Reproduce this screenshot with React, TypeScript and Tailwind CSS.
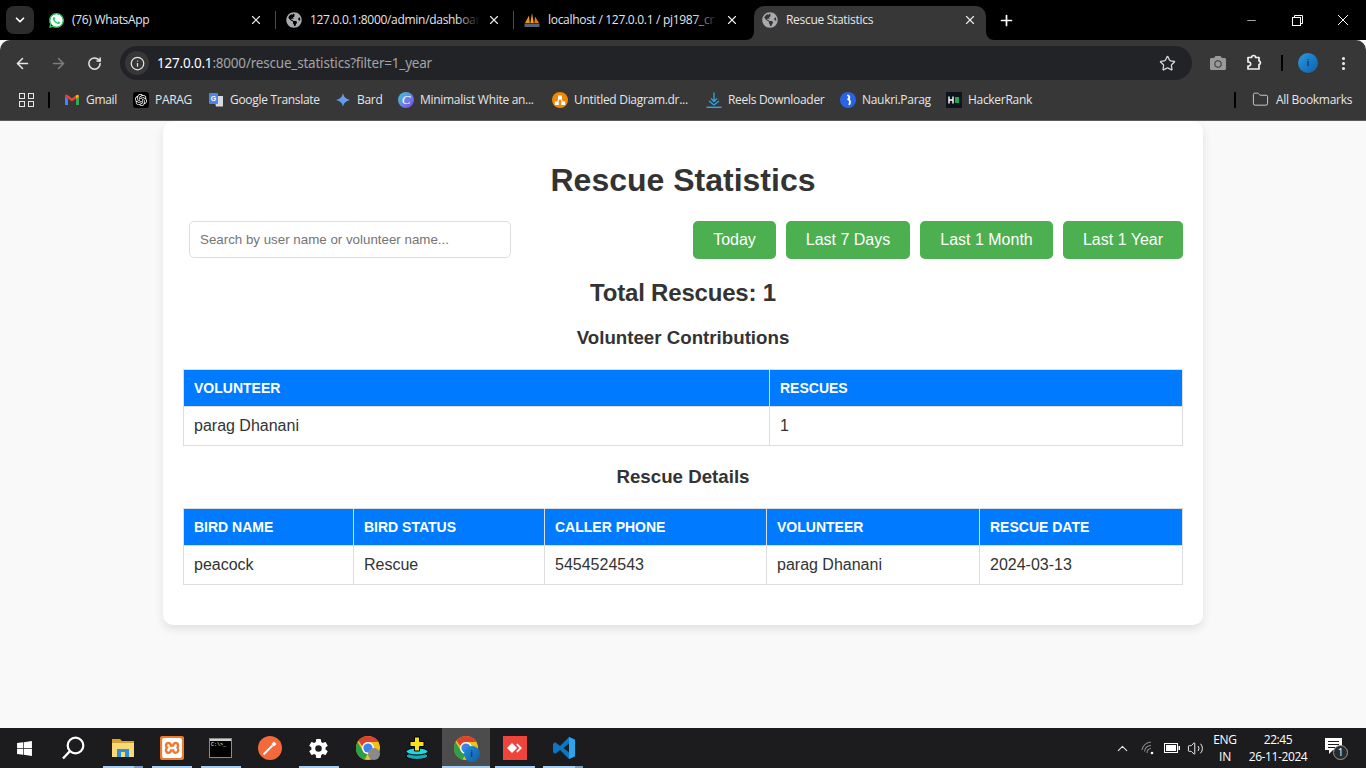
import React from 'react';
import { ArrowLeft, ArrowRight, RotateCw, Info, Star, X, Plus, ChevronDown, Minus, Folder, EllipsisVertical, ChevronUp, Volume2 } from 'lucide-react';
import { FaGlobeAmericas, FaWindows, FaWhatsapp, FaCamera } from 'react-icons/fa';
import { SiOpenai, SiXampp } from 'react-icons/si';
import { IoSettingsSharp } from 'react-icons/io5';

const uiFont = "font-['Open_Sans','Noto_Sans',sans-serif]";

const Globe = () => <FaGlobeAmericas className="text-[#a9aaad] shrink-0" size={16} />;

const WhatsAppIcon = () => (
  <span className="relative w-[17px] h-[17px] shrink-0 flex items-center justify-center">
    <span className="absolute inset-[2px] rounded-full bg-white" />
    <FaWhatsapp className="relative text-[#25d366]" size={17} />
  </span>
);

const PmaIcon = () => (
  <svg width="16" height="16" viewBox="0 0 16 16" className="shrink-0">
    <path d="M1 11 5 3.500 5.800 11z" fill="#f29111" />
    <path d="M6.400 11 8 1l1.800 10z" fill="#f6a21e" />
    <path d="M10.400 11 11 4.500 15 11z" fill="#e07b10" />
    <rect x="0.500" y="11.500" width="15" height="3.500" fill="#56627f" />
  </svg>
);

const Tab = ({ icon, title, divider }: { icon: React.ReactNode; title: string; divider?: boolean }) => (
  <div className="relative w-[238px] h-full flex items-center shrink-0 pl-2">
    <div className="w-4 flex justify-center">{icon}</div>
    <div className="relative ml-2 w-[170px] overflow-hidden whitespace-nowrap text-xs tracking-[-0.3px] text-[#e4e5e8]">
      {title}
      <span className="absolute right-0 inset-y-0 w-6 bg-gradient-to-r from-transparent to-black" />
    </div>
    <X size={14} strokeWidth={2} className="absolute left-[209px] text-[#e8e8e8]" />
    {divider && <span className="absolute left-[235px] top-[11px] h-[18px] w-px bg-[#4a4a4a]" />}
  </div>
);

const TabStrip = () => (
  <div className="h-10 bg-black flex shrink-0 relative">
    <div className="w-[40px] flex items-start pt-[6px] pl-[6px] shrink-0">
      <div className="w-[28px] h-[28px] rounded-lg bg-[#2c2c2c] flex items-center justify-center">
        <ChevronDown size={14} strokeWidth={3} className="text-white" />
      </div>
    </div>
    <div className="flex h-full">
      <Tab icon={<WhatsAppIcon />} title="(76) WhatsApp" divider />
      <Tab icon={<Globe />} title="127.0.0.1:8000/admin/dashboar" divider />
      <Tab icon={<PmaIcon />} title="localhost / 127.0.0.1 / pj1987_cr" />
      {/* active tab */}
      <div className="relative w-[232px] mt-[6px] h-[34px] pb-[6px] bg-[#373737] rounded-t-[10px] flex items-center shrink-0 pl-[8px]">
        <div className="w-4 flex justify-center">
          <Globe />
        </div>
        <span className="ml-2 text-xs tracking-[-0.3px] text-[#e6e6e6] whitespace-nowrap">Rescue Statistics</span>
        <X size={14} strokeWidth={2} className="absolute left-[209px] text-[#e8e8e8]" />
        <span className="absolute -left-2 bottom-0 w-2 h-2 bg-[#373737]">
          <span className="block w-2 h-2 bg-black rounded-br-[8px]" />
        </span>
        <span className="absolute -right-2 bottom-0 w-2 h-2 bg-[#373737]">
          <span className="block w-2 h-2 bg-black rounded-bl-[8px]" />
        </span>
      </div>
      <div className="w-[40px] flex items-center justify-center">
        <Plus size={17} strokeWidth={2.4} className="text-white" />
      </div>
    </div>
    <div className="ml-auto flex h-full items-center text-white">
      <div className="w-[46px] flex justify-center"><Minus size={13} strokeWidth={1.2} /></div>
      <div className="w-[46px] flex justify-center">
        <svg width="11" height="11" viewBox="0 0 11 11" fill="none" stroke="#fff" strokeWidth="1">
          <rect x="0.5" y="2.5" width="8" height="8" />
          <path d="M2.500 2.500v-2h8v8h-2" />
        </svg>
      </div>
      <div className="w-[46px] flex justify-center">
        <svg width="12" height="12" viewBox="0 0 12 12" stroke="#fff" strokeWidth="1"><path d="M1 1l10 10M11 1 1 11" /></svg>
      </div>
    </div>
  </div>
);

const PuzzleIcon = () => (
  <svg width="18" height="18" viewBox="0 0 18 18" fill="none" stroke="#f1f1f1" strokeWidth="1.700">
    <path d="M2 3.500h3.600a2 2 0 0 1 4 0H13v3.400a1.900 1.900 0 0 1 0 3.700V15H2v-3h.6a1.800 1.800 0 0 0 2-2 1.800 1.800 0 0 0-2-2H2z" strokeLinejoin="round" />
  </svg>
);

const Toolbar = () => (
  <div className="h-10 pt-[6px] bg-[#373737] rounded-t-[10px] flex items-center shrink-0 relative">
    <div className="w-[120px] flex items-center shrink-0">
      <div className="w-[44px] flex justify-center"><ArrowLeft size={17} strokeWidth={2.2} className="text-[#e6e6e6]" /></div>
      <div className="w-[28px] flex justify-center"><ArrowRight size={17} strokeWidth={2.2} className="text-[#7d7d7d]" /></div>
      <div className="w-[44px] flex justify-center"><RotateCw size={15} strokeWidth={2.4} className="text-[#e6e6e6]" /></div>
    </div>
    <div className="w-[1072px] h-[34px] rounded-full bg-[#222327] flex items-center shrink-0 pl-[5px]">
      <div className="w-6 h-6 rounded-full bg-[#373737] flex items-center justify-center">
        <Info size={15} strokeWidth={2} className="text-[#e6e6e6]" />
      </div>
      <div className="ml-[8px] text-[13.5px] tracking-[-0.2px] text-[#a2a3a6] whitespace-nowrap font-['Noto_Sans',sans-serif]">
        <span className="text-white">127.0.0.1</span>:8000/rescue_statistics?filter=1_year
      </div>
      <Star size={17} strokeWidth={1.8} className="ml-auto mr-[16px] text-[#d6d6d6]" />
    </div>
    <div className="flex-1 flex items-center">
      <div className="w-[52px] flex justify-center"><FaCamera size={16} className="text-[#9a9a9a]" /></div>
      <div className="w-[22px] flex justify-center"><PuzzleIcon /></div>
      <span className="ml-[15px] w-[2px] h-[16px] bg-black" />
      <span className="ml-[15px] w-5 h-5 rounded-full bg-gradient-to-br from-[#2a9be0] to-[#0f5fa8] flex items-center justify-center text-[9px] text-[#0b3f78] font-bold">i</span>
      <EllipsisVertical size={17} strokeWidth={2.4} className="ml-[17px] text-[#ececec]" />
    </div>
  </div>
);

const GmailIcon = () => (
  <svg width="16" height="16" viewBox="0 0 16 16" className="shrink-0">
    <path d="M1 4v9h3V7z" fill="#4285f4" />
    <path d="M15 4v9h-3V7z" fill="#34a853" />
    <path d="M1 4.200 8 9.500l7-5.300-.2-1.400-1.900-.1L8 6.200 3.100 2.700l-1.900.1z" fill="#ea4335" />
    <path d="M12 7l3-2.800V4l-2-1.300-1 .9z" fill="#fbbc04" />
  </svg>
);

const TranslateIcon = () => (
  <svg width="16" height="16" viewBox="0 0 16 16" className="shrink-0">
    <path d="M6 4h9v10.500H8z" fill="#d8d9dc" />
    <rect x="1" y="1" width="9" height="11" rx="1" fill="#4a86e8" />
    <text x="5.500" y="9" fontSize="7" fontWeight="700" fill="#fff" textAnchor="middle" fontFamily="'Liberation Sans',sans-serif">G</text>
  </svg>
);

const BardIcon = () => (
  <svg width="16" height="16" viewBox="0 0 16 16" className="shrink-0">
    <defs>
      <linearGradient id="bard" x1="0" y1="1" x2="1" y2="0">
        <stop offset="0" stopColor="#4f8cf0" />
        <stop offset="1" stopColor="#7fa6ee" />
      </linearGradient>
    </defs>
    <path d="M8 1c.7 3.900 2.700 6 7 7-4.300 1-6.300 3.100-7 7-.7-3.900-2.700-6-7-7 4.300-1 6.300-3.100 7-7z" fill="url(#bard)" />
  </svg>
);

const CanvaIcon = () => (
  <span className="w-4 h-4 rounded-full bg-gradient-to-br from-[#18c5d8] to-[#7a32e8] shrink-0 flex items-center justify-center text-white text-[13px] italic font-['Liberation_Serif',serif] leading-none">C</span>
);

const DrawioIcon = () => (
  <svg width="16" height="16" viewBox="0 0 16 16" className="shrink-0">
    <circle cx="8" cy="8" r="8" fill="#f08705" />
    <path d="M8 6 4.500 11M8 6l3.500 5" stroke="#fff" strokeWidth="1.200" />
    <rect x="6" y="3.500" width="4" height="3.500" fill="#fff" />
    <rect x="2.800" y="9.500" width="4" height="3.500" fill="#fff" />
    <rect x="9.200" y="9.500" width="4" height="3.500" fill="#fff" />
  </svg>
);

const ReelsIcon = () => (
  <svg width="16" height="16" viewBox="0 0 16 16" fill="none" stroke="#2aa8e6" strokeWidth="1.300" className="shrink-0">
    <path d="M8 0.500v9M5 6.500l3 3 3-3M3 9l5 4 5-4" />
    <path d="M0.500 15.300h15" strokeWidth="1.400" />
  </svg>
);

const NaukriIcon = () => (
  <svg width="16" height="16" viewBox="0 0 16 16" className="shrink-0">
    <circle cx="8" cy="8" r="8" fill="#2b63e8" />
    <path d="M8 3.500c1.800 1 1.800 2.500.3 3.800 1.700 1.200 2.200 3 1 5" fill="none" stroke="#fff" strokeWidth="1.800" strokeLinecap="round" />
  </svg>
);

const HackerRankIcon = () => (
  <svg width="16" height="16" viewBox="0 0 16 16" className="shrink-0">
    <rect width="16" height="16" fill="#0e141e" />
    <path d="M3 4.500v7M7 4.500v7M3 8h4" stroke="#fff" strokeWidth="1.400" />
    <rect x="9" y="5" width="4" height="6" fill="#1ba94c" />
  </svg>
);

const Bookmark = ({ icon, label, textWidth }: { icon: React.ReactNode; label: string; textWidth: string }) => (
  <div className="flex items-center gap-[6px] shrink-0">
    {icon}
    <span className={`text-xs tracking-[-0.3px] text-[#e6e6e6] whitespace-nowrap ${textWidth}`}>{label}</span>
  </div>
);

const BookmarksBar = () => (
  <div className="h-[41px] bg-[#373737] border-b border-[#5c5c5c] flex items-center shrink-0 relative pb-[1px]">
    <div className="w-[16px] ml-[19px] grid grid-cols-2 gap-[2px] shrink-0">
      <span className="w-[6px] h-[6px] border-[1.5px] border-[#e6e6e6]" />
      <span className="w-[6px] h-[6px] border-[1.5px] border-[#e6e6e6]" />
      <span className="w-[6px] h-[6px] border-[1.5px] border-[#e6e6e6]" />
      <span className="w-[6px] h-[6px] border-[1.5px] border-[#e6e6e6]" />
    </div>
    <span className="ml-[13px] w-[2px] h-[16px] bg-black shrink-0" />
    <div className="ml-[14px] flex items-center gap-4">
      <Bookmark icon={<GmailIcon />} label="Gmail" textWidth="w-[31px]" />
      <Bookmark
        icon={
          <span className="w-4 h-4 rounded-[3px] bg-black flex items-center justify-center shrink-0">
            <SiOpenai size={12} className="text-white" />
          </span>
        }
        label="PARAG"
        textWidth="w-[37px]"
      />
      <Bookmark icon={<TranslateIcon />} label="Google Translate" textWidth="w-[89px]" />
      <Bookmark icon={<BardIcon />} label="Bard" textWidth="w-[25px]" />
      <Bookmark icon={<CanvaIcon />} label="Minimalist White an..." textWidth="w-[116px]" />
      <Bookmark icon={<DrawioIcon />} label="Untitled Diagram.dr..." textWidth="w-[116px]" />
      <Bookmark icon={<ReelsIcon />} label="Reels Downloader" textWidth="w-[96px]" />
      <Bookmark icon={<NaukriIcon />} label="Naukri.Parag" textWidth="w-[68px]" />
      <Bookmark icon={<HackerRankIcon />} label="HackerRank" textWidth="w-[63px]" />
    </div>
    <span className="ml-auto w-[2px] h-[16px] bg-black shrink-0" />
    <div className="ml-[16px] mr-[14px] flex items-center gap-[7px]">
      <Folder size={17} strokeWidth={1.4} className="text-[#c9c9c9]" />
      <span className="text-xs tracking-[-0.3px] text-[#e6e6e6] whitespace-nowrap w-[76px]">All Bookmarks</span>
    </div>
  </div>
);

const FILTERS = [
  { label: 'Today', width: 'w-[83px]' },
  { label: 'Last 7 Days', width: 'w-[124px]' },
  { label: 'Last 1 Month', width: 'w-[133px]' },
  { label: 'Last 1 Year', width: 'w-[120px]' },
];

const DataTable = ({ cols, head, row }: { cols: string[]; head: string[]; row: string[] }) => (
  <table className="w-[999px] table-fixed border-collapse">
    <colgroup>
      {cols.map((c, i) => (
        <col key={i} className={c} />
      ))}
    </colgroup>
    <thead>
      <tr>
        {head.map((h) => (
          <th key={h} className="h-[37px] px-[10px] border border-[#dddddd] bg-[#007bff] text-left text-sm font-bold text-white uppercase">
            {h}
          </th>
        ))}
      </tr>
    </thead>
    <tbody>
      <tr>
        {row.map((c, i) => (
          <td key={i} className="h-[39px] px-[10px] border border-[#dddddd] text-base text-[#333333]">
            {c}
          </td>
        ))}
      </tr>
    </tbody>
  </table>
);

const Card = () => (
  <div className="w-[1040px] mx-auto bg-white rounded-[10px] shadow-[0_4px_10px_rgba(0,0,0,0.1)] px-5 pt-[41px] pb-10 font-['Liberation_Sans',Arial,sans-serif] text-[#333333]">
    <h1 className="text-[32px] leading-[37px] font-bold text-center">Rescue Statistics</h1>
    <div className="mt-[22px] flex items-start">
      <input
        readOnly
        placeholder="Search by user name or volunteer name..."
        className="ml-[6px] w-[322px] h-[37px] px-[10px] border border-[#dddddd] rounded-[5px] text-[13.33px] bg-white outline-none placeholder:text-[#757575]"
      />
      <div className="ml-auto flex gap-[10px]">
        {FILTERS.map((f) => (
          <button key={f.label} className={`h-[38px] rounded-[5px] bg-[#4caf50] text-base text-white ${f.width}`}>
            {f.label}
          </button>
        ))}
      </div>
    </div>
    <h2 className="mt-5 text-2xl tracking-[-0.2px] leading-[28px] font-bold text-center">Total Rescues: 1</h2>
    <h3 className="mt-[19px] text-[18.72px] leading-[23px] font-bold text-center">Volunteer Contributions</h3>
    <div className="mt-5">
      <DataTable cols={['w-[586px]', 'w-[413px]']} head={['Volunteer', 'Rescues']} row={['parag Dhanani', '1']} />
    </div>
    <h3 className="mt-[19px] text-[18.72px] leading-[23px] font-bold text-center">Rescue Details</h3>
    <div className="mt-5">
      <DataTable
        cols={['w-[170px]', 'w-[191px]', 'w-[222px]', 'w-[213px]', 'w-[203px]']}
        head={['Bird Name', 'Bird Status', 'Caller Phone', 'Volunteer', 'Rescue Date']}
        row={['peacock', 'Rescue', '5454524543', 'parag Dhanani', '2024-03-13']}
      />
    </div>
  </div>
);

const ChromeIcon = ({ badge }: { badge?: boolean }) => (
  <span className="relative w-6 h-6 block">
    <svg width="24" height="24" viewBox="0 0 24 24">
      <circle cx="12" cy="12" r="12" fill="#f2c21a" />
      <path d="M12 0a12 12 0 0 1 10.400 6H12a6 6 0 0 0-5.700 4L2.400 4.800A12 12 0 0 1 12 0z" fill="#e0412f" />
      <path d="M1.600 6 7 15a6 6 0 0 0 4.500 3l-3 5.700A12 12 0 0 1 1.600 6z" fill="#2f9e48" />
      <circle cx="12" cy="12" r="6" fill="#fff" />
      <circle cx="12" cy="12" r="4.600" fill="#3f83ea" />
    </svg>
    {badge ? (
      <span className="absolute right-[-2px] bottom-[-2px] w-4 h-4 rounded-full bg-gradient-to-br from-[#1f8fd8] to-[#0f5fa8] flex items-center justify-center text-[9px] text-[#0b3f78] font-bold">i</span>
    ) : (
      <span className="absolute right-0 bottom-0 w-3 h-3 rounded-full bg-[#8a8a8a]" />
    )}
  </span>
);

const TaskSlot = ({ children, underline, sliver, active, width = 'w-[49px]' }: { children: React.ReactNode; underline?: string; sliver?: string; active?: boolean; width?: string }) => (
  <div className={`relative h-full flex items-center justify-center shrink-0 ${width}`}>
    {active && <span className="absolute inset-y-0 left-[1px] right-0 bg-[#4c4c4c]" />}
    <div className="relative">{children}</div>
    {underline && <span className={`absolute bottom-0 h-[2px] bg-[#a6cdf2] ${underline}`} />}
    {sliver && <span className={`absolute bottom-0 h-[2px] bg-[#7f9dbb] ${sliver}`} />}
  </div>
);

const Taskbar = () => (
  <div className={`h-10 bg-[#1c1c1e] flex items-center shrink-0 text-white ${uiFont}`}>
    <TaskSlot width="w-[48px]"><FaWindows size={17} className="text-white" /></TaskSlot>
    <TaskSlot>
      <svg width="24" height="24" viewBox="0 0 24 24" fill="none" stroke="#fff" strokeWidth="2.200" className="block">
        <circle cx="14.500" cy="9.500" r="7.800" />
        <path d="M8.800 15.200 2 22.500" strokeWidth="2.400" />
      </svg>
    </TaskSlot>
    <div className="w-[1px] shrink-0" />
    <TaskSlot underline="left-[5px] w-[31px]" sliver="left-[36px] w-[9px]">
      <svg width="22" height="20" viewBox="0 0 22 20" className="block">
        <path d="M0 1h8l2 2h12v16H0z" fill="#d9a22d" />
        <path d="M0 5h22v14H0z" fill="#f9d977" />
        <rect x="5" y="11" width="12" height="8" fill="#2f8fd8" />
        <rect x="9" y="14" width="4" height="5" fill="#f9d977" />
      </svg>
    </TaskSlot>
    <TaskSlot underline="left-[5px] w-[40px]">
      <span className="w-6 h-6 rounded-[2px] bg-[#ee7a2e] flex items-center justify-center">
        <SiXampp size={20} className="text-white" />
      </span>
    </TaskSlot>
    <TaskSlot underline="left-[5px] w-[40px]">
      <span className="w-[23px] h-[20px] border border-[#8a8a8a] bg-black block relative overflow-hidden">
        <span className="absolute top-0 inset-x-0 h-[2px] bg-[#cfcfcf]" />
        <span className="absolute top-[4px] left-[1px] text-[5px] leading-none text-white font-['Liberation_Mono',monospace] whitespace-nowrap">C:\&gt;_</span>
      </span>
    </TaskSlot>
    <TaskSlot>
      <svg width="24" height="24" viewBox="0 0 24 24" className="block">
        <circle cx="12" cy="12" r="12" fill="#f4693a" />
        <path d="M5.500 18.500 14.500 9.500" stroke="#fff" strokeWidth="1.800" />
        <path d="M13.500 8 16 5.500l2.500 2.500L16 10.500z" fill="#fff" />
      </svg>
    </TaskSlot>
    <TaskSlot underline="left-[5px] w-[40px]"><IoSettingsSharp size={21} className="text-white" /></TaskSlot>
    <TaskSlot><ChromeIcon /></TaskSlot>
    <TaskSlot>
      <svg width="24" height="24" viewBox="0 0 24 24" className="block">
        <ellipse cx="12" cy="20" rx="11" ry="3.500" fill="#16a9b8" stroke="#000" />
        <ellipse cx="12" cy="15.500" rx="11" ry="3.500" fill="#1ed6e0" stroke="#000" />
        <path d="M9.500 1h5v4.500H19v5h-4.500V15h-5v-4.500H5v-5h4.500z" fill="#f6e21c" stroke="#000" />
      </svg>
    </TaskSlot>
    <TaskSlot active underline="left-[1px] w-[48px]"><ChromeIcon badge /></TaskSlot>
    <TaskSlot underline="left-[5px] w-[40px]">
      <svg width="24" height="24" viewBox="0 0 24 24" className="block">
        <rect width="24" height="24" fill="#ef443b" />
        <path d="M9 7l5 5-5 5-5-5z" fill="#fff" />
        <path d="M14.500 7.500 19 12l-4.500 4.500-1.300-1.300 3.200-3.200-3.200-3.200z" fill="#fff" />
      </svg>
    </TaskSlot>
    <TaskSlot underline="left-[4px] w-[32px]" sliver="left-[36px] w-[8px]">
      <svg width="24" height="24" viewBox="0 0 24 24" className="block">
        <path d="M17 1 8 10 3.400 6.300 1 7.700v8.600l2.400 1.400L8 14l9 9 6-2.800V3.800zM17 7.500v9L11.500 12z" fill="#0a76c4" fillRule="evenodd" />
        <path d="M17 1l6 2.800v16.400L17 23z" fill="#2aa5ec" />
      </svg>
    </TaskSlot>
    <div className="ml-auto flex items-center h-full">
      <ChevronUp size={17} strokeWidth={1.5} className="text-[#e6e6e6]" />
      <svg width="16" height="16" viewBox="0 0 16 16" fill="none" stroke="#8a8a8a" strokeWidth="1.100" className="ml-[10px]">
        <path d="M1 10a10 10 0 0 1 9-8M3.500 11.500a7 7 0 0 1 6.500-6M6 13a4 4 0 0 1 4-4.500" />
        <circle cx="11" cy="13" r="1.300" fill="#fff" stroke="none" />
      </svg>
      <svg width="17" height="10" viewBox="0 0 17 10" fill="none" stroke="#fff" className="ml-[7px]">
        <rect x="0.500" y="0.500" width="13" height="9" />
        <rect x="2" y="2" width="10" height="6" fill="#fff" stroke="none" />
        <rect x="14.500" y="3" width="1.500" height="4" fill="#fff" stroke="none" />
      </svg>
      <Volume2 size={17} strokeWidth={1.3} className="ml-[6px] text-white" />
      <div className="ml-[9px] w-[24px] text-xs tracking-[-0.3px] leading-[17px] text-center">
        <div>ENG</div>
        <div>IN</div>
      </div>
      <div className="ml-[6px] w-[70px] text-xs tracking-[-0.4px] leading-[17px] text-center whitespace-nowrap">
        <div>22:45</div>
        <div>26-11-2024</div>
      </div>
      <div className="relative ml-[12px] mr-[21px] w-[20px] h-[20px]">
        <svg width="17" height="16" viewBox="0 0 17 16" className="absolute left-0 top-0">
          <path d="M0 0h17v12H8l-4 4v-4H0z" fill="#fff" />
          <path d="M3 3.500h11M3 6.500h11M3 9.500h7" stroke="#1c1c1e" />
        </svg>
        <span className="absolute left-[8px] top-[7px] w-[15px] h-[15px] rounded-full border border-[#9a9a9a] bg-[#2a2a2a] text-[10px] leading-[13px] text-center text-white">1</span>
      </div>
    </div>
  </div>
);

export default function App() {
  return (
    <div className="w-full h-screen flex flex-col overflow-hidden bg-[#f9f9f9]">
      <div className={uiFont}>
        <TabStrip />
        <Toolbar />
        <BookmarksBar />
      </div>
      <div className="flex-1 overflow-hidden">
        <Card />
      </div>
      <Taskbar />
    </div>
  );
}
